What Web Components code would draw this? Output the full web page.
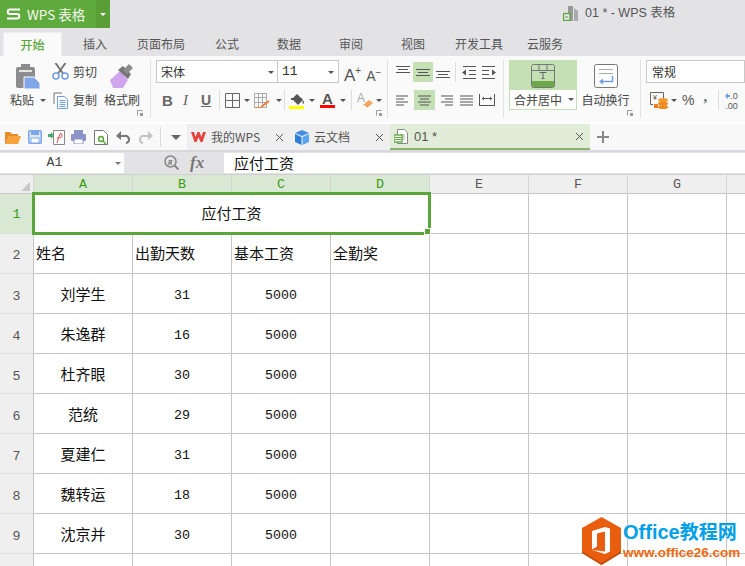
<!DOCTYPE html>
<html lang="zh">
<head>
<meta charset="utf-8">
<title>01 * - WPS 表格</title>
<style>
  html, body { margin: 0; padding: 0; }
  body {
    width: 745px; height: 566px; overflow: hidden; position: relative;
    display: flex; flex-direction: column; background: #fff;
    font-family: "Noto Sans CJK SC", "Liberation Sans", sans-serif;
  }
</style>
</head>
<body>
<wps-titlebar></wps-titlebar>
<wps-ribbon></wps-ribbon>
<wps-quickbar></wps-quickbar>
<wps-formula cell="A1">应付工资</wps-formula>
<wps-sheet></wps-sheet>
<office-mark></office-mark>

<script>
// all icons in one table: [width, height, svg content]
const ICONS = {
  paste: [26, 25, '<rect x="1" y="3" width="19" height="21" rx="2" fill="#8c8c8c"/><rect x="6" y="0" width="9" height="6" fill="#8c8c8c"/><rect x="4" y="6" width="13" height="2" fill="#e4e4e4"/><path d="M9 13h10l6 6v6H9z" fill="#7ea6e8" stroke="#fff"/>'],
  cut: [17, 17, '<path d="M6 10.500L13.500 0M11 10.500L3.500 0" stroke="#777" stroke-width="2" fill="none"/><circle cx="4" cy="13" r="3" fill="none" stroke="#6f9fe0" stroke-width="1.500"/><circle cx="13" cy="13" r="3" fill="none" stroke="#6f9fe0" stroke-width="1.500"/>'],
  copy: [16, 17, '<path d="M1 12V1h8" fill="none" stroke="#777"/><path d="M4.500 4.500h7l3 3v9h-10z" fill="#fff" stroke="#6f9fe0"/><path d="M6.500 8.500h6M6.500 10.500h6M6.500 12.500h6M6.500 14.500h6" stroke="#6f9fe0"/>'],
  brush: [24, 26, '<path d="M0 17L10 8l8 9-5 8H3z" fill="#cfa6ee"/><path d="M8 7l5-4 8 8-3 5z" fill="#777"/><path d="M13 7l6-6 4 4-6 6z" fill="#8c8c8c"/>'],
  launcher: [6, 6, '<path d="M.5 5.500V.5h5" fill="none" stroke="#999"/><path d="M3 3h3v3H3z" fill="#999"/>'],
  grid: [15, 15, '<path d="M.5.500h14v14H.5zM7.500.500v14M.5 7.500h14" fill="none" stroke="#666"/>'],
  fillgrid: [16, 15, '<path d="M.5.500h12v14H.5zM.5 4.500h12M.5 9.500h12M4.500.500v14M8.500.500v14" fill="none" stroke="#aaa"/><path d="M7 14l8-6" stroke="#ef7d31" stroke-width="2"/><path d="M1 14.500h5" stroke="#ef7d31" stroke-dasharray="2 1"/>'],
  fill: [16, 17, '<path d="M3 7l5-5 6 6-5 5z" fill="#555"/><path d="M2 7h11" stroke="#555" stroke-width="2"/><path d="M14 8q2 3 0 4-1-2 0-4z" fill="#555"/><rect x="0" y="14" width="15" height="3" fill="#ff0"/>'],
  eraser: [16, 17, '<text x="0" y="10" font-family="Liberation Sans" font-size="12" fill="#aaa">A</text><path d="M6 13l6-5 4 3-6 5z" fill="#f3a55c"/><path d="M7 13l3 3" stroke="#fff"/>'],
  at: [14, 12, '<path d="M0 .5h14M2 3.500h10M0 6.500h14" stroke="#555" fill="none"/>'],
  am: [14, 12, '<path d="M0 3.500h14M2 6.500h10M0 9.500h14" stroke="#555" fill="none"/>'],
  ab: [14, 12, '<path d="M0 5.500h14M2 8.500h10M0 11.500h14" stroke="#555" fill="none"/>'],
  indl: [14, 13, '<path d="M1 .5h13M7 4.500h7M7 8.500h7M1 12.500h13" stroke="#555"/><path d="M0 6.500l4-3v6z" fill="#555"/>'],
  indr: [14, 13, '<path d="M0 .5h13M0 4.500h7M0 8.500h7M0 12.500h13" stroke="#555"/><path d="M14 6.500l-4-3v6z" fill="#555"/>'],
  al: [13, 11, '<path d="M0 .5h12M0 3.500h8M0 6.500h12M0 9.500h8" stroke="#555" transform="translate(0 .5)"/>'],
  ac: [13, 11, '<path d="M0 1h13M2 4h9M0 7h13M2 10h9" stroke="#555"/>'],
  ar: [13, 11, '<path d="M1 1h12M5 4h8M1 7h12M5 10h8" stroke="#555"/>'],
  aj: [13, 11, '<path d="M0 1h13M0 4h13M0 7h13M0 10h13" stroke="#555"/>'],
  ad: [16, 12, '<path d="M.5 0v12M15.500 0v12M1 11.500h14" stroke="#555"/><path d="M3 4.500h10" stroke="#555"/><path d="M3 4.500l2-2v4zM13 4.500l-2-2v4z" fill="#555"/>'],
  merge: [24, 24, '<rect x=".5" y=".5" width="23" height="23" rx="2" fill="#c5e0b5" stroke="#777"/><path d="M1 6.500h22M8 1v5.500M16 1v5.500" stroke="#777"/><path d="M1 17h22v5a1 1 0 0 1-1 1H2a1 1 0 0 1-1-1z" fill="#6da84a"/><path d="M8.500 8.500h7M12 8.500v6M10.500 14.500h3" stroke="#666" fill="none"/>'],
  wrap: [24, 24, '<rect x=".5" y=".5" width="23" height="23" rx="2" fill="#fff" stroke="#777"/><path d="M5 5.500h14M5 9.500h14" stroke="#aaa"/><path d="M18.500 12v5.500H9" fill="none" stroke="#6f9fe0" stroke-width="1.500"/><path d="M5 17.500l4-3v6z" fill="#6f9fe0"/>'],
  money: [18, 17, '<path d="M3 12.500H.5V.5h13v6" fill="none" stroke="#666"/><text x="3" y="8" font-family="Liberation Sans" font-size="7" fill="#555">¥</text><rect x="4" y="12" width="4" height="4" fill="#ef7d21"/><ellipse cx="13" cy="8" rx="5" ry="2" fill="#f39a2d"/><ellipse cx="13" cy="11.500" rx="5" ry="2" fill="#ef8a21"/><ellipse cx="13" cy="15" rx="5" ry="2" fill="#ef8a21"/>'],
  incdec: [5, 6, '<path d="M0 3l3-3v2h2v2H3v2z" fill="#6f9fe0"/>'],
  open: [16, 13, '<path d="M0 1h5l2 2h6v2H4l-3 8H0z" fill="#e98b2a"/><path d="M4 5h12l-3 8H1z" fill="#f8a23c"/>'],
  save: [14, 14, '<rect x=".75" y=".75" width="12.500" height="12.500" rx="1" fill="#dbe7fb" stroke="#7ea6e8" stroke-width="1.500"/><rect x="3" y="1" width="8" height="4" fill="#7ea6e8"/><rect x="3" y="8" width="8" height="5" fill="#fff" stroke="#7ea6e8"/>'],
  pdf: [17, 15, '<path d="M5.500.5h11v14h-11z" fill="#fff" stroke="#888"/><path d="M0 4h3V2l3 3.500L3 9V7H0z" fill="#4aa66b"/><path d="M9 13q2-7 3-9t2 1-5 3" fill="none" stroke="#d9534f"/>'],
  print: [15, 14, '<rect x="3" y="0" width="9" height="4" fill="#8b93c9"/><rect x="0" y="4" width="15" height="7" rx="1" fill="#8b93c9"/><rect x="3" y="9" width="9" height="5" fill="#fff" stroke="#8b93c9"/>'],
  preview: [14, 15, '<path d="M.5.5h9l4 4v10H.5z" fill="#fff" stroke="#777"/><circle cx="7" cy="9" r="2.500" fill="none" stroke="#5aa63a" stroke-width="1.500"/><path d="M9 11l3 3" stroke="#5aa63a" stroke-width="1.500"/>'],
  undo: [14, 14, '<path d="M3 6h6a3.500 3.500 0 0 1 1 7" fill="none" stroke="#777" stroke-width="2.200"/><path d="M0 6l5-5v9z" fill="#777"/>'],
  redo: [14, 14, '<path d="M11 6H5a3.500 3.500 0 0 0-1 7" fill="none" stroke="#c4c4c4" stroke-width="2.200"/><path d="M14 6L9 1v9z" fill="#c4c4c4"/>'],
  wpsw: [15, 12, '<path d="M0 1l3.500 10h2L7.500 6l2 5h2L15 1h-3l-1.500 5L8.500 1h-2L4.500 6 3 1z" fill="#e8403a"/>'],
  cube: [14, 15, '<path d="M7 0l7 3-7 3-7-3z" fill="#3f8fe0"/><path d="M0 4l6.500 3v8L0 12z" fill="#2f7fd8"/><path d="M14 4L7.500 7v8l6.500-3z" fill="#5aa5ee"/>'],
  sheetdoc: [14, 15, '<path d="M3.500.5h7l3 3v11h-10z" fill="#fff" stroke="#888"/><path d="M6 6h5M6 8h5M6 10h5" stroke="#aaa"/><rect x="0" y="6" width="8" height="7" fill="#fff" stroke="#5aa63a" stroke-width="1.300"/><path d="M1 8.500h6M1 10.500h6" stroke="#5aa63a"/>'],
  close: [9, 9, '<path d="M1 1l7 7M8 1L1 8" stroke="#555" fill="none"/>'],
  plus: [12, 12, '<path d="M6 0v12M0 6h12" stroke="#888" stroke-width="2"/>'],
  lens: [15, 16, '<circle cx="6.500" cy="6.500" r="5.500" fill="none" stroke="#888" stroke-width="1.500"/><path d="M10.500 10.500l4 4" stroke="#888" stroke-width="2"/><text x="4" y="9.500" font-family="Liberation Mono" font-size="7" fill="#777">R</text>'],
  wpss: [15, 12, '<path d="M14 1.500H4a2 2 0 0 0 0 4.500h7a2 2 0 0 1 0 4.500H1" fill="none" stroke="#fff" stroke-width="2"/>'],
  filedoc: [16, 15, '<path d="M5 0h5v15H5z" fill="#999"/><path d="M11 2l4 3v10h-4z" fill="#aaa"/><rect x=".5" y="7.500" width="6.500" height="7" fill="#e3e3e6" stroke="#5aa63a" stroke-width="1.300"/><path d="M2 11h3" stroke="#5aa63a"/>']
};

class WpsIcon extends HTMLElement {
  connectedCallback() {
    const ic = ICONS[this.getAttribute('name')];
    this.attachShadow({ mode: 'open' }).innerHTML = `
      <style>:host{display:block;flex:none;width:${ic[0]}px;height:${ic[1]}px;line-height:0}</style>
      <svg width="${ic[0]}" height="${ic[1]}" viewBox="0 0 ${ic[0]} ${ic[1]}">${ic[2]}</svg>`;
  }
}
customElements.define('wps-icon', WpsIcon);

class WpsTitlebar extends HTMLElement {
  connectedCallback() {
    // gap before each tab, the reference spacing is not regular
    const tabs = [['插入', 21], ['页面布局', 30], ['公式', 30], ['数据', 38], ['审阅', 38], ['视图', 38], ['开发工具', 30], ['云服务', 24]];
    this.attachShadow({ mode: 'open' }).innerHTML = `
      <style>
        :host{display:block;flex:none;height:56px;background:#e3e3e6;color:#555;font-size:12px}
        .top{height:31px;display:flex;align-items:flex-start}
        .btn{width:96px;height:28px;background:#5faa3c;color:#f4f8ef;display:flex;align-items:center;gap:6px;padding-left:6px;box-sizing:border-box;font-size:13.5px}
        .more{width:14px;height:28px;background:#5a9f35;display:flex;align-items:center;justify-content:center}
        .more i{border:3px solid transparent;border-top:3px solid #fff;border-bottom:0}
        .file{margin-left:453px;margin-top:6px;display:flex;gap:6px;font-size:12.5px;line-height:15px;font-family:"Liberation Sans","Noto Sans CJK SC",sans-serif}
        .tabs{height:25px;display:flex;align-items:flex-end;padding-left:3px}
        .on{width:59px;height:24px;background:#fafafa;color:#5aa63a;display:flex;align-items:center;justify-content:center;border:1px solid #eee;border-bottom:0;box-sizing:border-box;font-weight:500}
        .t{height:24px;line-height:24px}
      </style>
      <div class="top">
        <div class="btn"><wps-icon name="wpss"></wps-icon><span>WPS 表格</span></div>
        <div class="more"><i></i></div>
        <div class="file"><wps-icon name="filedoc"></wps-icon><span>01 * - WPS 表格</span></div>
      </div>
      <div class="tabs">
        <div class="on">开始</div>
        ${tabs.map(t => `<div class="t" style="margin-left:${t[1]}px">${t[0]}</div>`).join('')}
      </div>`;
  }
}
customElements.define('wps-titlebar', WpsTitlebar);

class WpsRibbon extends HTMLElement {
  connectedCallback() {
    this.attachShadow({ mode: 'open' }).innerHTML = `
      <style>
        :host{display:flex;flex:none;height:66px;margin-bottom:2px;background:#fafafa;color:#444;font-size:12px;box-sizing:border-box;padding-top:4px}
        .g{position:relative;flex:none;border-right:1px solid #e2e2e2;height:58px;box-sizing:border-box;display:flex;flex-direction:column}
        .g.lined{display:flex;flex-direction:row}
        .r1{height:30px;display:flex;align-items:flex-start}
        .r2{height:20px;display:flex;align-items:center}
        .col{display:flex;flex-direction:column;align-items:flex-start}
        .lau{position:absolute;bottom:2px}
        .car{flex:none;width:0;height:0;border:3px solid transparent;border-top:3px solid #555;border-bottom:0}
        .sep{flex:none;width:1px;height:20px;background:#ddd}
        .box{height:23px;box-sizing:border-box;border:1px solid #c8c8c8;background:#fff;display:flex;align-items:center;padding-left:4px;position:relative;color:#333}
        .box .car{position:absolute;right:4px;top:10px}
        .s{flex:none;width:20px;height:20px;display:flex;align-items:center;justify-content:center}
        .act{background:#c5e0b5}
        .tx{flex:none;line-height:16px}
        .b{font:bold 15px "Liberation Sans",sans-serif;color:#666;width:10px}
        .i{font:italic 15px "Liberation Serif",serif;color:#666;width:9px}
        .u{font:bold 14px "Liberation Sans",sans-serif;color:#666;text-decoration:underline;width:11px}
        .aa{font-family:"Liberation Sans",sans-serif;color:#555;line-height:1;display:flex}
        .aa sup{font-size:10px;line-height:10px;margin-top:-1px;vertical-align:baseline}
        .ca{flex:none;width:15px;font:bold 15px/13px "Liberation Sans",sans-serif;color:#555;text-align:center;border-bottom:3px solid #f00}
        .merge{margin-left:5px;width:68px}
        .mt{height:30px;background:#c5e0b5;display:flex;justify-content:center;padding-top:4px;box-sizing:border-box}
        .mb{height:20px;background:#fff;border:1px solid #c5e0b5;border-top:0;box-sizing:border-box;display:flex;align-items:center;padding-left:4px;gap:6px}
        .wrapc{width:63px;display:flex;flex-direction:column;align-items:center}
        .wt{height:30px;padding-top:4px;box-sizing:border-box;margin-left:-6px}
        .pct{font:14px "Liberation Sans",sans-serif;color:#555}
        .cma{font:bold 15px/12px "Liberation Serif",serif;color:#666;height:12px;margin-top:-9px}
        .dec{display:flex;flex-direction:column;font:9px/10px "Liberation Sans",sans-serif;color:#555;padding-top:1px}
        .dec span{display:flex;align-items:center;justify-content:flex-end}
      </style>

      <div class="g lined" style="width:151px">
        <div class="col" style="width:52px;padding-left:10px;box-sizing:border-box">
          <div class="r1" style="padding:4px 0 0 5px;box-sizing:border-box"><wps-icon name="paste"></wps-icon></div>
          <div class="r2" style="gap:6px"><span class="tx">粘贴</span><i class="car"></i></div>
        </div>
        <div class="col" style="width:52px">
          <div class="r1" style="gap:4px;padding-top:3px;box-sizing:border-box"><wps-icon name="cut"></wps-icon><span class="tx" style="margin-top:1px">剪切</span></div>
          <div class="r2" style="gap:4px;margin-left:1px"><wps-icon name="copy"></wps-icon><span class="tx">复制</span></div>
        </div>
        <div class="col" style="width:40px">
          <div class="r1" style="padding:3px 0 0 6px;box-sizing:border-box"><wps-icon name="brush"></wps-icon></div>
          <div class="r2"><span class="tx">格式刷</span></div>
        </div>
        <wps-icon class="lau" name="launcher" style="left:137px"></wps-icon>
      </div>

      <div class="g" style="width:237px">
        <div class="r1" style="margin-left:5px">
          <div class="box" style="width:121px;border-right:0">宋体<i class="car" style="right:3px"></i></div>
          <div class="box" style="width:62px;font-family:'Liberation Mono',monospace;font-size:13px">11<i class="car"></i></div>
          <div class="aa" style="margin:7px 0 0 5px;font-size:17px">A<sup>+</sup></div>
          <div class="aa" style="margin:9px 0 0 5px;font-size:14px">A<sup>−</sup></div>
        </div>
        <div class="r2">
          <span class="b" style="margin-left:11px">B</span>
          <span class="i" style="margin-left:11px">I</span>
          <span class="u" style="margin-left:9px">U</span>
          <i class="sep" style="margin-left:7px"></i>
          <wps-icon name="grid" style="margin-left:5px"></wps-icon>
          <i class="car" style="margin-left:4px"></i>
          <wps-icon name="fillgrid" style="margin-left:4px"></wps-icon>
          <i class="car" style="margin-left:6px"></i>
          <i class="sep" style="margin-left:2px"></i>
          <wps-icon name="fill" style="margin-left:4px"></wps-icon>
          <i class="car" style="margin-left:4px"></i>
          <span class="ca" style="margin-left:5px">A</span>
          <i class="car" style="margin-left:5px"></i>
          <i class="sep" style="margin-left:5px"></i>
          <wps-icon name="eraser" style="margin-left:5px"></wps-icon>
          <i class="car" style="margin-left:3px"></i>
        </div>
        <wps-icon class="lau" name="launcher" style="left:225px"></wps-icon>
      </div>

      <div class="g" style="width:116px">
        <div class="r1" style="margin:2px 0 0 5px;height:28px">
          <div class="s"><wps-icon name="at"></wps-icon></div>
          <div class="s act"><wps-icon name="am"></wps-icon></div>
          <div class="s"><wps-icon name="ab"></wps-icon></div>
          <i class="sep" style="margin-left:2px"></i>
          <div class="s" style="margin-left:3px"><wps-icon name="indl"></wps-icon></div>
          <div class="s"><wps-icon name="indr"></wps-icon></div>
        </div>
        <div class="r2" style="margin-left:4px">
          <div class="s"><wps-icon name="al"></wps-icon></div>
          <div class="s act" style="margin-left:2px;width:21px"><wps-icon name="ac"></wps-icon></div>
          <div class="s" style="margin-left:1px"><wps-icon name="ar"></wps-icon></div>
          <div class="s"><wps-icon name="aj"></wps-icon></div>
          <div class="s" style="width:21px"><wps-icon name="ad"></wps-icon></div>
        </div>
      </div>

      <div class="g lined" style="width:137px">
        <div class="merge">
          <div class="mt"><wps-icon name="merge"></wps-icon></div>
          <div class="mb"><span class="tx">合并居中</span><i class="car"></i></div>
        </div>
        <div class="wrapc">
          <div class="wt"><wps-icon name="wrap"></wps-icon></div>
          <div class="r2"><span class="tx" style="margin-left:-6px">自动换行</span></div>
        </div>
        <wps-icon class="lau" name="launcher" style="left:123px"></wps-icon>
      </div>

      <div class="g" style="width:104px;border:0">
        <div class="r1" style="margin-left:5px"><div class="box" style="width:110px;padding-left:5px">常规</div></div>
        <div class="r2" style="margin-left:9px">
          <wps-icon name="money"></wps-icon>
          <i class="car" style="margin-left:3px"></i>
          <span class="pct" style="margin-left:5px">%</span>
          <span class="cma" style="margin-left:9px">,</span>
          <i class="sep" style="margin-left:11px"></i>
          <div class="dec" style="margin-left:6px"><span><wps-icon name="incdec"></wps-icon>.0</span><span>.00</span></div>
        </div>
      </div>`;
  }
}
customElements.define('wps-ribbon', WpsRibbon);

class WpsQuickbar extends HTMLElement {
  connectedCallback() {
    this.attachShadow({ mode: 'open' }).innerHTML = `
      <style>
        :host{display:flex;flex:none;height:28px;box-sizing:border-box;border-bottom:2px solid #d8d8dc;background:#f9f9f9;color:#555;font-size:12px;align-items:stretch}
        .ics{width:187px;flex:none;display:flex;align-items:center}
        .sep{flex:none;width:1px;height:20px;background:#ddd}
        .car{flex:none;border:5px solid transparent;border-top:5px solid #666;border-bottom:0}
        .tab{flex:none;display:flex;align-items:center;background:#efefef;box-sizing:border-box;position:relative}
        .tab span{margin-top:-2px}
        .tab wps-icon.x{position:absolute}
        .act{background:#e2edd9;border-bottom:2px solid #8ab56f}
        .add{margin-left:7px;align-self:center}
      </style>
      <div class="ics">
        <wps-icon name="open" style="margin-left:5px"></wps-icon>
        <wps-icon name="save" style="margin-left:7px"></wps-icon>
        <wps-icon name="pdf" style="margin-left:6px"></wps-icon>
        <wps-icon name="print" style="margin-left:6px"></wps-icon>
        <wps-icon name="preview" style="margin-left:8px"></wps-icon>
        <wps-icon name="undo" style="margin-left:8px"></wps-icon>
        <wps-icon name="redo" style="margin-left:9px"></wps-icon>
        <i class="sep" style="margin-left:7px"></i>
        <i class="car" style="margin-left:10px"></i>
      </div>
      <div class="tab" style="width:103px"><wps-icon name="wpsw" style="margin-left:4px"></wps-icon><span style="margin-left:5px">我的WPS</span><wps-icon class="x" name="close" style="left:88px"></wps-icon></div>
      <div class="tab" style="width:100px"><wps-icon name="cube" style="margin-left:5px"></wps-icon><span style="margin-left:5px">云文档</span><wps-icon class="x" name="close" style="left:85px"></wps-icon></div>
      <div class="tab act" style="width:200px"><wps-icon name="sheetdoc" style="margin-left:4px"></wps-icon><span style="margin-left:6px;margin-top:0;font-family:'Liberation Sans',sans-serif;font-size:13px">01 *</span><wps-icon class="x" name="close" style="left:185px"></wps-icon></div>
      <wps-icon class="add" name="plus"></wps-icon>`;
  }
}
customElements.define('wps-quickbar', WpsQuickbar);

class WpsFormula extends HTMLElement {
  connectedCallback() {
    this.attachShadow({ mode: 'open' }).innerHTML = `
      <style>
        :host{display:flex;flex:none;height:23px;box-sizing:border-box;padding:1px 0 1px;background:#e3e3e6;border-bottom:1px solid #cfcfd4;align-items:stretch}
        .name{width:124px;flex:none;background:#fff;box-sizing:border-box;position:relative;text-align:center;font:13.3px/20px "Liberation Mono",monospace;color:#444;padding-right:15px}
        .name i{position:absolute;right:3px;top:9px;border:3px solid transparent;border-top:3px solid #777;border-bottom:0}
        .fx{width:100px;flex:none;display:flex;align-items:center;padding-left:40px;box-sizing:border-box;gap:11px;color:#777;font:italic bold 17px "Liberation Serif",serif}
        .val{flex:1;background:#fff;padding-left:10px;color:#111;font-size:15px;line-height:20px}
      </style>
      <div class="name">${this.getAttribute('cell')}<i></i></div>
      <div class="fx"><wps-icon name="lens"></wps-icon><span>fx</span></div>
      <div class="val"><slot></slot></div>`;
  }
}
customElements.define('wps-formula', WpsFormula);

class WpsSheet extends HTMLElement {
  connectedCallback() {
    const rows = [
      ['姓名', '出勤天数', '基本工资', '全勤奖'],
      ['刘学生', '31', '5000'],
      ['朱逸群', '16', '5000'],
      ['杜齐眼', '30', '5000'],
      ['范统', '29', '5000'],
      ['夏建仁', '31', '5000'],
      ['魏转运', '18', '5000'],
      ['沈京并', '30', '5000']
    ];
    const cols = ['A', 'B', 'C', 'D', 'E', 'F', 'G', ''];
    let html = '<div class="corner"><i></i></div>';
    cols.forEach((c, i) => { html += `<div class="ch${i < 4 ? ' sel' : ''}">${c}</div>`; });
    html += '<div class="rh sel">1</div><div class="c title">应付工资</div>';
    for (let k = 4; k < 8; k++) html += '<div class="c"></div>';
    rows.forEach((r, n) => {
      html += `<div class="rh${n === 0 ? ' two' : ''}">${n + 2}</div>`;
      for (let k = 0; k < 8; k++) {
        const v = r[k] || '';
        const cls = n === 0 ? 'c head' : (k === 0 ? 'c name' : 'c num');
        html += `<div class="${cls}">${v}</div>`;
      }
    });
    // row 10 only shows its top edge in the window, number is below the fold
    html += '<div class="rh"></div>';
    for (let k = 0; k < 8; k++) html += '<div class="c"></div>';
    this.attachShadow({ mode: 'open' }).innerHTML = `
      <style>
        :host{display:block;flex:1;min-height:0;overflow:hidden;position:relative;background:#fff;font-size:15px;color:#111}
        .grid{display:grid;grid-template-columns:34px repeat(7,99px) 80px;grid-template-rows:19px repeat(10,40px)}
        .corner{background:#efefef;border-right:1px solid #d4d4d4;border-bottom:1px solid #c6c6c6;position:relative}
        .corner i{position:absolute;right:3px;bottom:2px;border-left:9px solid transparent;border-bottom:9px solid #c8c8c8}
        .ch{background:#efefef;color:#555;border-right:1px solid #d4d4d4;border-bottom:1px solid #c6c6c6;text-align:center;font:13.3px/19px "Liberation Mono",monospace}
        .rh{background:#efefef;color:#555;border-right:1px solid #c6c6c6;border-bottom:1px solid #ddd;text-align:center;font:13.3px/45px "Liberation Mono",monospace;box-sizing:border-box}
        .rh.two{line-height:43px}
        .rh.sel{background:#d9e8d3;color:#3a9a10;line-height:42px}
        .ch.sel{background:#d9e8d3;color:#3a9a10}
        .c{border-right:1px solid #c6c6c6;border-bottom:1px solid #c6c6c6;line-height:38px;white-space:nowrap;overflow:hidden}
        .title{grid-column:span 4;text-align:center}
        .head{padding-left:2px}
        .name{text-align:center;line-height:40px}
        .num{text-align:center;font:13.3px/44px "Liberation Mono",monospace}
        .pick{position:absolute;left:32px;top:17px;width:399px;height:43px;box-sizing:border-box;border:3px solid #5aa63a}
        .pick i{position:absolute;right:-3px;bottom:-3px;width:5px;height:5px;background:#5aa63a;border:1px solid #fff}
      </style>
      <div class="grid">${html}</div>
      <div class="pick"><i></i></div>`;
  }
}
customElements.define('wps-sheet', WpsSheet);

class OfficeMark extends HTMLElement {
  connectedCallback() {
    this.attachShadow({ mode: 'open' }).innerHTML = `
      <style>
        :host{position:absolute;left:582px;top:517px;display:flex;gap:2px}
        .t{display:flex;flex-direction:column;margin-top:2px}
        .a{font:bold 20px/24px "Liberation Sans","Noto Sans CJK SC",sans-serif;color:#00a0e9;white-space:nowrap}
        .a span{font-family:"Noto Sans CJK SC",sans-serif;font-size:19px}
        .w{font:bold 13.5px/15px "Liberation Sans",sans-serif;color:#ee6a10;white-space:nowrap;margin-top:1px}
      </style>
      <svg width="39" height="48" viewBox="0 0 39 48">
        <path d="M19.500 0L39 11v25L19.500 48 0 36V11z" fill="#e85d0e"/>
        <path d="M0 36l19.500 12L39 36v-2L19.500 46 0 34z" fill="#c94c06"/>
        <path d="M10 14l13-4 5 1.500v23L23 37l-13-4 13 1.500V14.500l-8 2v13l-5 3z" fill="#fff"/>
      </svg>
      <div class="t"><div class="a">Office<span>教程网</span></div><div class="w">www.office26.com</div></div>`;
  }
}
customElements.define('office-mark', OfficeMark);
</script>
</body>
</html>
